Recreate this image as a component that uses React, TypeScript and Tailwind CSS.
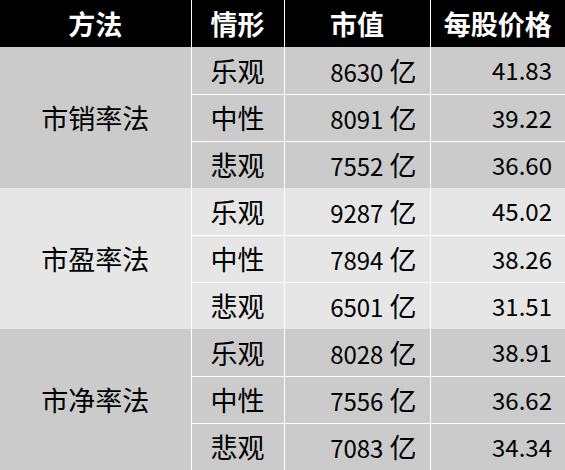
import React from "react";

const groups = [
  {
    name: "市销率法",
    bg: "bg-[#cbcbcb]",
    rows: [
      ["乐观", "8630", "41.83"],
      ["中性", "8091", "39.22"],
      ["悲观", "7552", "36.60"],
    ],
  },
  {
    name: "市盈率法",
    bg: "bg-[#e6e6e6]",
    rows: [
      ["乐观", "9287", "45.02"],
      ["中性", "7894", "38.26"],
      ["悲观", "6501", "31.51"],
    ],
  },
  {
    name: "市净率法",
    bg: "bg-[#cbcbcb]",
    rows: [
      ["乐观", "8028", "38.91"],
      ["中性", "7556", "36.62"],
      ["悲观", "7083", "34.34"],
    ],
  },
];

export default function App() {
  return (
    <div
      className="w-[565px] h-[470px] overflow-hidden bg-white text-black"
      style={{ fontFamily: '"Noto Sans CJK SC", "Noto Sans", sans-serif' }}
    >
      <table className="w-[565px] table-fixed border-collapse text-[27px] leading-none">
        <colgroup>
          <col className="w-[191px]" />
          <col className="w-[93px]" />
          <col className="w-[146px]" />
          <col className="w-[135px]" />
        </colgroup>
        <thead>
          <tr className="h-[47px] bg-black text-white font-bold text-[27px]">
            <th className="p-0 text-center">方法</th>
            <th className="p-0 text-center border-l border-white">情形</th>
            <th className="p-0 text-center border-l border-white">市值</th>
            <th className="p-0 text-center border-l border-white">每股价格</th>
          </tr>
        </thead>
        <tbody>
          {groups.map((g) =>
            g.rows.map((r, i) => (
              <tr key={g.name + i} className={`h-[47px] ${g.bg}`}>
                {i === 0 && (
                  <td rowSpan={3} className="p-0 text-center align-middle">
                    {g.name}
                  </td>
                )}
                <td
                  className={`p-0 text-center border-l border-white ${
                    i > 0 ? "border-t" : ""
                  }`}
                >
                  {r[0]}
                </td>
                <td
                  className={`p-0 pr-[13px] text-right border-l border-white ${
                    i > 0 ? "border-t" : ""
                  }`}
                >
                  <span className="text-[24px]">{r[1]}</span>
                  <span className="text-[27px]"> 亿</span>
                </td>
                <td
                  className={`p-0 pr-[13px] text-right text-[24px] border-l border-white ${
                    i > 0 ? "border-t" : ""
                  }`}
                >
                  {r[2]}
                </td>
              </tr>
            ))
          )}
        </tbody>
      </table>
    </div>
  );
}
